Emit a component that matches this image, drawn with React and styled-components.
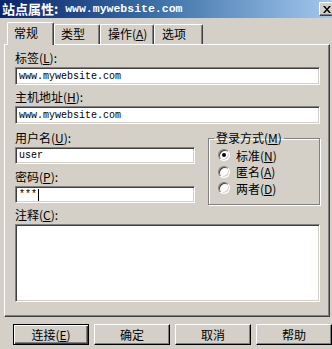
import React from "react";
import styled, { createGlobalStyle } from "styled-components";

const GlobalStyle = createGlobalStyle`
  html, body { margin: 0; padding: 0; background: #d4d0c8; }
  body { width: 332px; height: 349px; overflow: hidden; }
`;

const Window = styled.div`
  width: 337px;
  height: 349px;
  background: #d4d0c8;
  display: flex;
  flex-direction: column;
  font-family: "Noto Sans CJK SC", "Liberation Sans", sans-serif;
  font-size: 12px;
  color: #000;
`;

const TitleBar = styled.div`
  height: 18px;
  display: flex;
  align-items: center;
  padding-left: 2px;
  background: linear-gradient(to right, #0a246a 0%, #3a6ea5 45%, #a6caf0 100%);
  color: #fff;
  font-weight: bold;
`;

const TitleCJK = styled.span`
  font-size: 13px;
  line-height: 18px;
`;

const TitleMono = styled.span`
  font-family: "Liberation Mono", monospace;
  font-size: 11.5px;
  font-weight: bold;
  line-height: 18px;
`;

const CloseButton = styled.div`
  margin-left: auto;
  margin-right: 2px;
  width: 16px;
  height: 14px;
  box-sizing: border-box;
  background: #d4d0c8;
  border: 1px solid;
  border-color: #fff #404040 #404040 #fff;
  box-shadow: inset -1px -1px #808080;
  display: flex;
  align-items: center;
  justify-content: center;
`;

const Body = styled.div`
  display: flex;
  flex-direction: column;
  padding: 4px 0 0 4px;
`;

const TabRow = styled.div`
  display: flex;
  align-items: flex-end;
  height: 22px;
  padding-left: 3px;
`;

const Tab = styled.div`
  position: relative;
  z-index: ${(p) => (p.$active ? 2 : 1)};
  box-sizing: border-box;
  width: ${(p) => p.$w}px;
  height: ${(p) => (p.$active ? 23 : 20)}px;
  margin-bottom: ${(p) => (p.$active ? -1 : 0)}px;
  padding-left: ${(p) => p.$pl}px;
  background: #d4d0c8;
  border-top: 1px solid #fff;
  border-left: 1px solid #fff;
  border-right: 1px solid #404040;
  border-top-left-radius: 2px;
  border-top-right-radius: 2px;
  box-shadow: inset -1px 0 #808080;
  line-height: ${(p) => (p.$active ? 19 : 18)}px;
  white-space: nowrap;
`;

const Panel = styled.div`
  box-sizing: border-box;
  width: 326px;
  height: 273px;
  border: 1px solid;
  border-color: #fff #404040 #404040 #fff;
  box-shadow: inset -1px -1px #808080;
  padding: 7px 9px 0 10px;
  display: flex;
  flex-direction: column;
`;

const Label = styled.div`
  height: 12px;
  line-height: 12px;
  white-space: nowrap;
  margin-top: ${(p) => p.$mt || 0}px;
  margin-bottom: 3px;
`;

const Field = styled.div`
  box-sizing: border-box;
  width: ${(p) => p.$w || 305}px;
  height: ${(p) => p.$h || 18}px;
  background: #fff;
  border: 1px solid;
  border-color: #808080 #fff #fff #808080;
  box-shadow: inset 1px 1px #404040, inset -1px -1px #d4d0c8;
  padding-left: 3px;
  display: flex;
  align-items: center;
  font-family: "Liberation Mono", monospace;
  font-size: 10px;
  margin-bottom: ${(p) => p.$mb || 0}px;
`;

const Caret = styled.span`
  display: inline-block;
  width: 1px;
  height: 12px;
  background: #000;
  margin-left: 1px;
`;

const Row = styled.div`
  display: flex;
  justify-content: space-between;
  margin-top: 8px;
`;

const Column = styled.div`
  display: flex;
  flex-direction: column;
`;

const GroupBox = styled.fieldset`
  box-sizing: border-box;
  width: 112px;
  height: 73px;
  margin: 0;
  padding: 3px 0 0 0;
  border: 1px solid #808080;
  box-shadow: inset 1px 1px #fff, 1px 1px #fff;
  display: flex;
  flex-direction: column;
`;

const Legend = styled.legend`
  margin-left: 5px;
  padding: 0 2px;
  line-height: 12px;
  height: 12px;
  white-space: nowrap;
`;

const RadioRow = styled.div`
  display: flex;
  align-items: center;
  height: 16.5px;
  gap: 6px;
  padding-left: 9px;
  white-space: nowrap;
`;

const RadioCircle = styled.span`
  box-sizing: border-box;
  width: 12px;
  height: 12px;
  border-radius: 50%;
  border: 1px solid;
  border-color: #808080 #fff #fff #808080;
  box-shadow: inset 1px 1px #404040, inset -1px -1px #d4d0c8;
  background: #fff;
  display: flex;
  align-items: center;
  justify-content: center;
  &::after {
    content: "";
    width: 4px;
    height: 4px;
    border-radius: 50%;
    background: ${(p) => (p.$checked ? "#000" : "transparent")};
  }
`;

const ButtonRow = styled.div`
  display: flex;
  gap: 5px;
  margin-top: 7px;
  padding-left: 9px;
`;

const Button = styled.div`
  box-sizing: border-box;
  width: 76px;
  height: 21px;
  background: #d4d0c8;
  display: flex;
  align-items: center;
  justify-content: center;
  border: 1px solid;
  border-color: ${(p) => (p.$default ? "#000" : "#fff #000 #000 #fff")};
  box-shadow: ${(p) =>
    p.$default
      ? "inset 1px 1px #fff, inset -1px -1px #404040, inset -2px -2px #808080"
      : "inset -1px -1px #808080"};
  white-space: nowrap;
`;

const CloseIcon = () => (
  <svg width="8" height="7" viewBox="0 0 8 7">
    <path d="M0 0h2l2 2.5L6 0h2L5 3.5 8 7H6L4 4.5 2 7H0l3-3.5z" fill="#000" />
  </svg>
);

const Radio = ({ checked, children }) => (
  <RadioRow>
    <RadioCircle $checked={checked} />
    <span>{children}</span>
  </RadioRow>
);

export default function App() {
  return (
    <>
      <GlobalStyle />
      <Window>
        <TitleBar>
          <TitleCJK>站点属性:</TitleCJK>
          <TitleMono>&nbsp;www.mywebsite.com</TitleMono>
          <CloseButton>
            <CloseIcon />
          </CloseButton>
        </TitleBar>
        <Body>
          <TabRow>
            <Tab $active $w={47} $pl={6}>常规</Tab>
            <Tab $w={46} $pl={6}>类型</Tab>
            <Tab $w={54} $pl={7}>操作(<u>A</u>)</Tab>
            <Tab $w={49} $pl={7}>选项</Tab>
          </TabRow>
          <Panel>
            <Label>标签(<u>L</u>):</Label>
            <Field $mb={6}>www.mywebsite.com</Field>
            <Label>主机地址(<u>H</u>):</Label>
            <Field>www.mywebsite.com</Field>
            <Row>
              <Column>
                <Label>用户名(<u>U</u>):</Label>
                <Field $w={180} $h={17} $mb={7}>user</Field>
                <Label>密码(<u>P</u>):</Label>
                <Field $w={180} $h={17}>
                  ***
                  <Caret />
                </Field>
              </Column>
              <GroupBox>
                <Legend>登录方式(<u>M</u>)</Legend>
                <Radio checked>标准(<u>N</u>)</Radio>
                <Radio>匿名(<u>A</u>)</Radio>
                <Radio>两者(<u>D</u>)</Radio>
              </GroupBox>
            </Row>
            <Label $mt={4}>注释(<u>C</u>):</Label>
            <Field $h={78} />
          </Panel>
          <ButtonRow>
            <Button $default>连接(<u>E</u>)</Button>
            <Button>确定</Button>
            <Button>取消</Button>
            <Button>帮助</Button>
          </ButtonRow>
        </Body>
      </Window>
    </>
  );
}
